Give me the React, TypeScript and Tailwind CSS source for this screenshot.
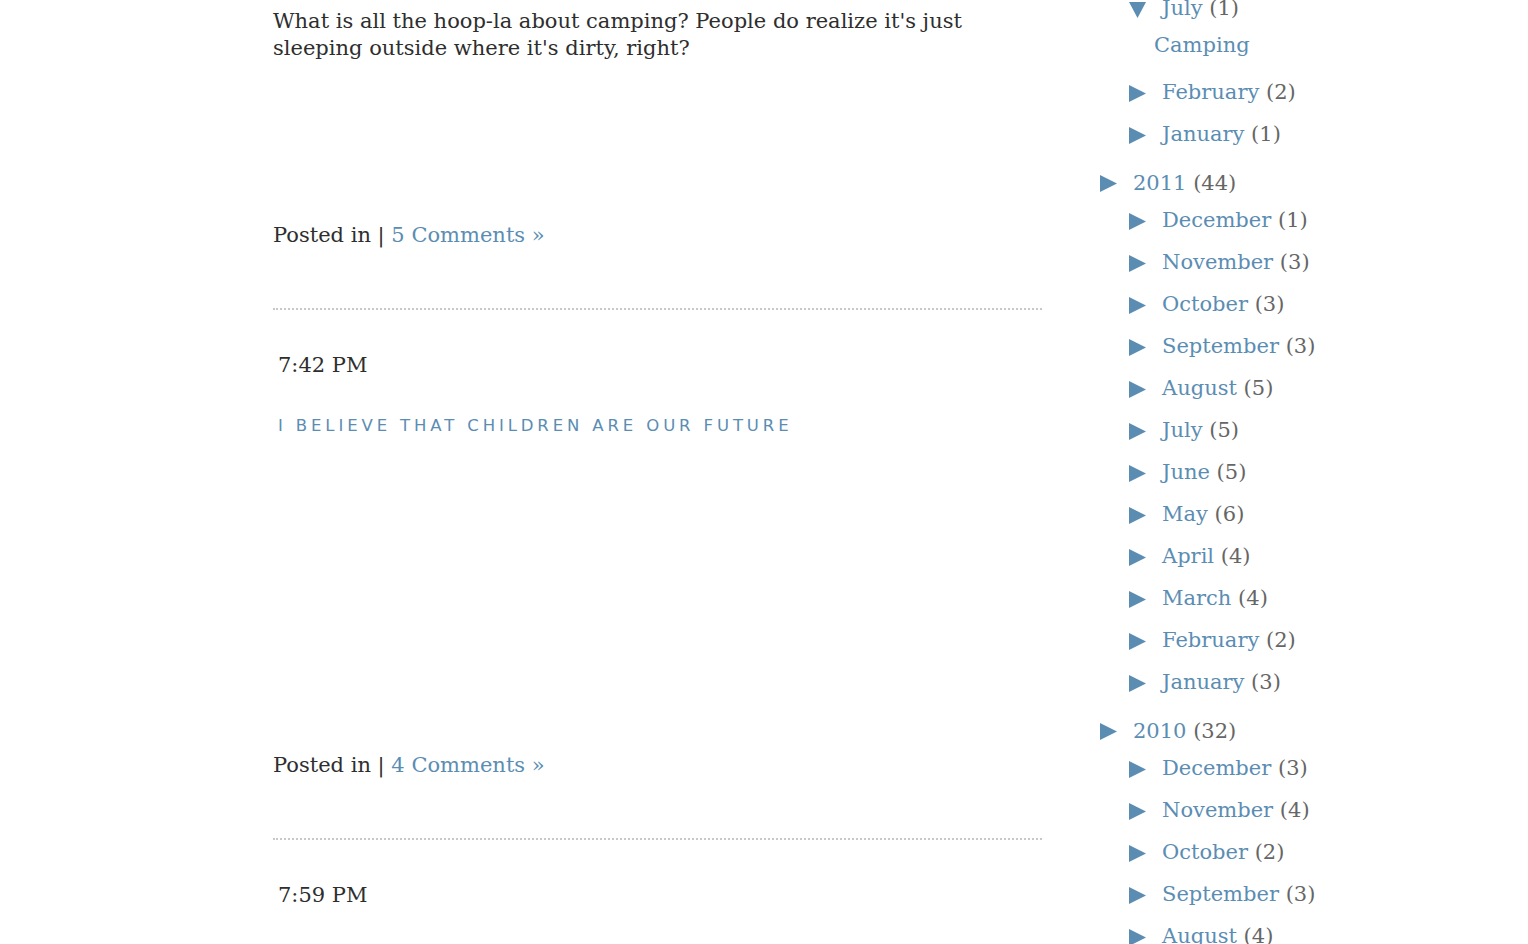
import type { ReactNode } from "react";

const serif = "font-['DejaVu_Serif',Georgia,serif]";

function Tri({ down = false }: { down?: boolean }) {
  return (
    <svg width="17" height="17" viewBox="0 0 17 17" className="shrink-0">
      {down ? (
        <polygon points="0,1 17,1 8.5,17" fill="#5b8db3" />
      ) : (
        <polygon points="0,0 17,8.5 0,17" fill="#5b8db3" />
      )}
    </svg>
  );
}

function Month({ name, count }: { name: string; count: number }) {
  return (
    <li className="flex items-center gap-[16px] pl-[29px] h-[42px]">
      <Tri />
      <span>
        <a className="text-[#5b8db3]">{name}</a>{" "}
        <span className="text-[#666]">({count})</span>
      </span>
    </li>
  );
}

function Year({ year, count, children }: { year: string; count: number; children: ReactNode }) {
  return (
    <li className="mt-[11px]">
      <div className="flex items-center gap-[16px] h-[33px]">
        <Tri />
        <span>
          <a className="text-[#5b8db3]">{year}</a>{" "}
          <span className="text-[#666]">({count})</span>
        </span>
      </div>
      <ul>{children}</ul>
    </li>
  );
}

function Post({ time, title, body, bodyHeight, comments }: { time?: string; title?: string; body?: string; bodyHeight: number; comments: number }) {
  return (
    <div>
      {time && <div className="pl-[5px] pt-[40px] h-[104px] leading-[30px]">{time}</div>}
      {title && (
        <h2 className="pl-[5px] font-['DejaVu_Sans',sans-serif] text-[16.5px] tracking-[0.235em] uppercase text-[#5b8db3] leading-[24px]">
          {title}
        </h2>
      )}
      <div style={{ height: bodyHeight }} className="leading-[27px]">
        {body}
      </div>
      <div className="leading-[30px]">
        Posted in | <a className="text-[#5b8db3]">{comments} Comments »</a>
      </div>
      <div className="mt-[58px] border-b-2 border-dotted border-[#c8c8c8]" />
    </div>
  );
}

const y2011: [string, number][] = [
  ["December", 1],
  ["November", 3],
  ["October", 3],
  ["September", 3],
  ["August", 5],
  ["July", 5],
  ["June", 5],
  ["May", 6],
  ["April", 4],
  ["March", 4],
  ["February", 2],
  ["January", 3],
];

const y2010: [string, number][] = [
  ["December", 3],
  ["November", 4],
  ["October", 2],
  ["September", 3],
  ["August", 4],
];

export default function App() {
  return (
    <div className={`h-[944px] overflow-hidden bg-white text-[#2e2e2e] ${serif} text-[21px]`}>
      <div className="flex">
        <main className="ml-[273px] w-[769px] pt-[8px]">
          <Post
            body="What is all the hoop-la about camping? People do realize it's just sleeping outside where it's dirty, right?"
            bodyHeight={212}
            comments={5}
          />
          <Post
            time="7:42 PM"
            title="I believe that children are our future"
            bodyHeight={312}
            comments={4}
          />
          <div className="pl-[5px] pt-[40px] leading-[30px]">7:59 PM</div>
        </main>
        <aside className="ml-[58px] -mt-[12px]">
          <ul>
            <li className="pl-[29px] flex items-center gap-[16px] h-[36px] mt-[3px]">
              <Tri down />
              <span>
                <a className="text-[#5b8db3]">July</a> <span className="text-[#666]">(1)</span>
              </span>
            </li>
            <li className="pl-[54px] h-[45px] leading-[36px] text-[#5b8db3]">Camping</li>
            <Month name="February" count={2} />
            <Month name="January" count={1} />
            <Year year="2011" count={44}>
              {y2011.map(([m, c], i) => (
                <Month key={i} name={m} count={c} />
              ))}
            </Year>
            <Year year="2010" count={32}>
              {y2010.map(([m, c], i) => (
                <Month key={i} name={m} count={c} />
              ))}
            </Year>
          </ul>
        </aside>
      </div>
    </div>
  );
}
